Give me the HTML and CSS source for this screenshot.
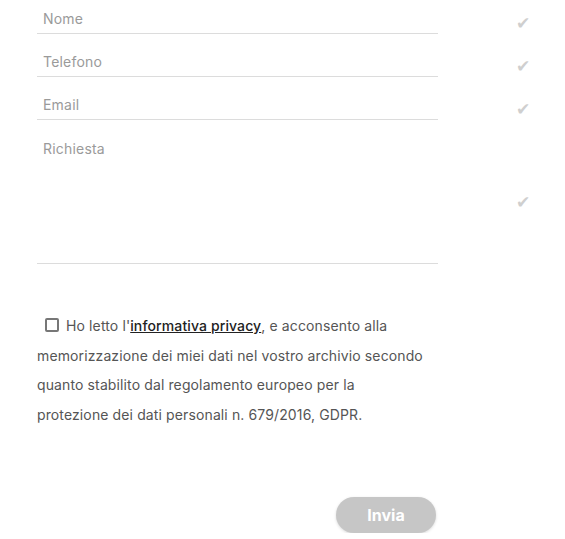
FILE: index.html
```html
<!DOCTYPE html>
<html>
    <head>
        <link rel="stylesheet" href="styles.css">
    </head>
    <body>
        <form class="contact-form">
            <div class="field-row">
                <input class="field" type="text" placeholder="Nome">
                <span class="check">&#10004;</span>
            </div>
            <div class="field-row">
                <input class="field" type="text" placeholder="Telefono">
                <span class="check">&#10004;</span>
            </div>
            <div class="field-row">
                <input class="field" type="text" placeholder="Email">
                <span class="check">&#10004;</span>
            </div>
            <div class="field-row">
                <textarea class="field area" placeholder="Richiesta"></textarea>
                <span class="check check-area">&#10004;</span>
            </div>

            <div class="privacy">
                <span class="box"></span>Ho letto l'<a href="#">informativa privacy</a>, e acconsento alla<br>
                memorizzazione dei miei dati nel vostro archivio secondo<br>
                quanto stabilito dal regolamento europeo per la<br>
                protezione dei dati personali n. 679/2016, GDPR.
            </div>

            <div class="actions">
                <button type="button" class="send">Invia</button>
            </div>
        </form>
    </body>
</html>
```

FILE: styles.css
```css
body {
    margin: 0;
    background: #ffffff;
    font-family: Inter, "Liberation Sans", sans-serif;
}

.contact-form {
    margin-top: -9px;
    padding-left: 37px;
}

.field-row {
    display: flex;
    align-items: flex-start;
}

.field {
    width: 401px;
    height: 43px;
    box-sizing: border-box;
    border: none;
    border-bottom: 1px solid #dcdcdc;
    padding: 12px 6px 0 6px;
    font-family: Inter, "Liberation Sans", sans-serif;
    font-size: 14px;
    letter-spacing: 0.2px;
    color: #555;
    outline: none;
    background: transparent;
}

.field::placeholder {
    color: #9a9a9a;
}

.area {
    height: 144px;
    resize: none;
    padding-top: 20px;
}

.check {
    margin-left: 78px;
    margin-top: 23px;
    font-size: 17px;
    line-height: 18px;
    color: #cfcfcf;
}

.check-area {
    margin-top: 73px;
}

.privacy {
    width: 420px;
    margin-top: 47px;
    font-size: 14px;
    line-height: 29.6px;
    color: #555;
    letter-spacing: 0.12px;
}

.box {
    display: inline-block;
    width: 10px;
    height: 10px;
    border: 2px solid #777;
    border-radius: 2px;
    margin: 0 7px 0 8px;
    vertical-align: -1px;
}

.privacy a {
    color: #222;
    font-weight: 500;
    text-decoration: underline;
}

.actions {
    width: 401px;
    display: flex;
    justify-content: flex-end;
    margin-top: 68px;
}

.send {
    width: 100px;
    height: 36px;
    margin-right: 2px;
    border: none;
    border-radius: 18px;
    background: #c6c6c6;
    color: #ffffff;
    font-family: Inter, "Liberation Sans", sans-serif;
    font-size: 16px;
    font-weight: 700;
    box-shadow: 0 1px 3px rgba(0, 0, 0, 0.15);
}
```
